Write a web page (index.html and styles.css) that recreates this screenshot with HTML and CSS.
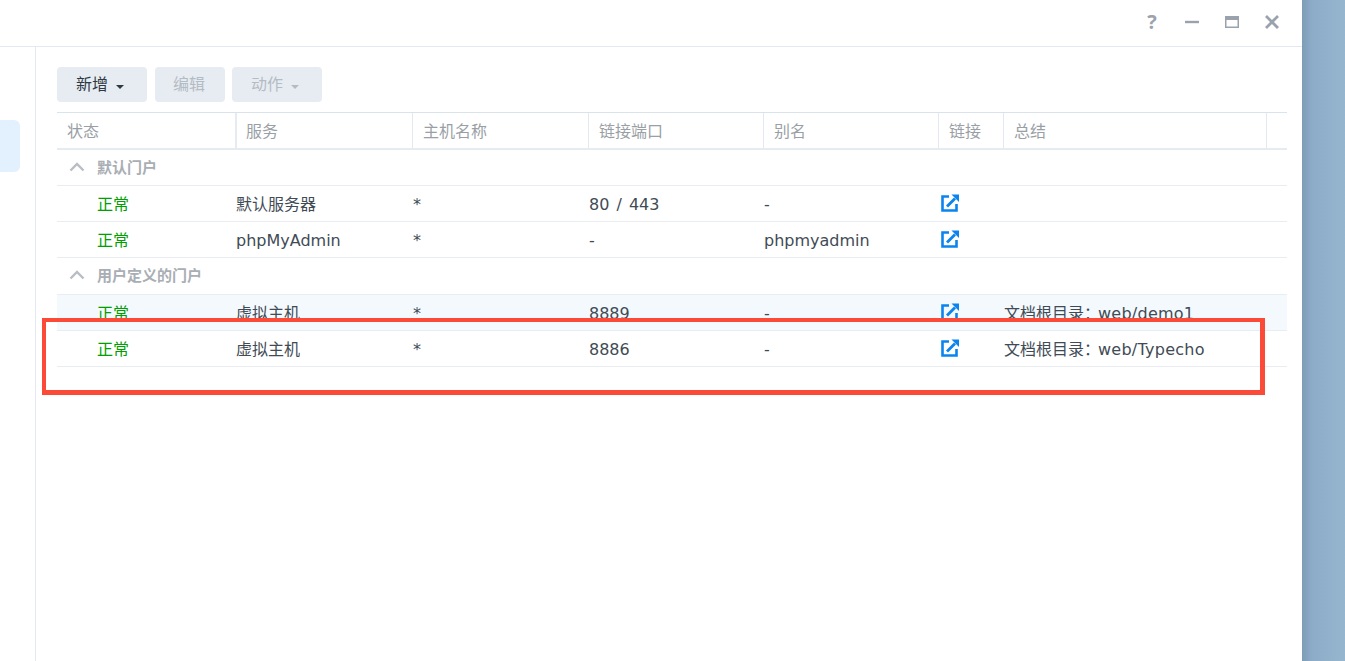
FILE: index.html
```html
<!DOCTYPE html>
<html lang="zh">
<head>
<meta charset="utf-8">
<title>Web Station</title>
<link rel="stylesheet" href="styles.css">
</head>
<body>
<div class="desktop">
  <div class="window">
    <header class="titlebar">
      <span class="win-btn help">?</span>
      <svg class="win-btn" viewBox="0 0 16 16"><path d="M1 8h14" stroke="#9aa3ad" stroke-width="2.400" fill="none"/></svg>
      <svg class="win-btn" viewBox="0 0 16 16"><path fill-rule="evenodd" d="M1 2h14v12H1zM2.500 6v6.500h11V6z" fill="#9aa3ad"/></svg>
      <svg class="win-btn" viewBox="0 0 16 16"><path d="M2 2l12 12M14 2L2 14" stroke="#9aa3ad" stroke-width="2.800" fill="none"/></svg>
    </header>
    <div class="body">
      <aside class="sidebar"><div class="side-item"></div></aside>
      <main class="content">
        <div class="toolbar">
          <button class="btn w-add">新增<i class="caret"></i></button>
          <button class="btn w-edit off">编辑</button>
          <button class="btn w-act off">动作<i class="caret"></i></button>
        </div>
        <div class="table">
          <div class="row head">
            <div>状态</div><div>服务</div><div>主机名称</div><div>链接端口</div><div>别名</div><div>链接</div><div>总结</div><div></div>
          </div>
          <div class="group"><svg class="chev" viewBox="0 0 16 10"><path d="M1.500 8.500L8 2l6.500 6.500" fill="none" stroke="#b9bec4" stroke-width="2.400"/></svg>默认门户</div>
          <div class="row">
            <div class="ok">正常</div><div>默认服务器</div><div>*</div><div class="port">80 / 443</div><div>-</div>
            <div><svg class="link" viewBox="0 0 18 18"><use href="#ext"/></svg></div><div></div><div></div>
          </div>
          <div class="row">
            <div class="ok">正常</div><div>phpMyAdmin</div><div>*</div><div>-</div><div>phpmyadmin</div>
            <div><svg class="link" viewBox="0 0 18 18"><use href="#ext"/></svg></div><div></div><div></div>
          </div>
          <div class="group tall"><svg class="chev" viewBox="0 0 16 10"><path d="M1.500 8.500L8 2l6.500 6.500" fill="none" stroke="#b9bec4" stroke-width="2.400"/></svg>用户定义的门户</div>
          <div class="row hover">
            <div class="ok">正常</div><div>虚拟主机</div><div>*</div><div>8889</div><div>-</div>
            <div><svg class="link" viewBox="0 0 18 18"><use href="#ext"/></svg></div><div>文档根目录：<span class="path">web/demo1</span></div><div></div>
          </div>
          <div class="row">
            <div class="ok">正常</div><div>虚拟主机</div><div>*</div><div>8886</div><div>-</div>
            <div><svg class="link" viewBox="0 0 18 18"><use href="#ext"/></svg></div><div>文档根目录：<span class="path">web/Typecho</span></div><div></div>
          </div>
        </div>
      </main>
    </div>
    <div class="mark"></div>
  </div>
</div>
<svg class="defs" width="0" height="0">
  <defs>
    <g id="ext">
      <path d="M8 2.500H1.500v14h14V10" fill="none" stroke="#0a84ee" stroke-width="2.600"/>
      <path d="M6 12.500L14 4.500" fill="none" stroke="#0a84ee" stroke-width="2.800"/>
      <path d="M10.500 0.500H18V8z" fill="#0a84ee"/>
    </g>
  </defs>
</svg>
</body>
</html>
```

FILE: styles.css
```css
* { box-sizing: border-box; }
html, body { margin: 0; height: 100%; overflow: hidden; }
body { font-family: "DejaVu Sans", "Noto Sans CJK SC", sans-serif; font-size: 16px; color: #414b55; }
.desktop { height: 661px; width: 1345px; background: linear-gradient(90deg, #7d9cb6 1302px, #8cacc7 1312px, #96b6d0 1345px); }
.window { position: relative; width: 1302px; height: 661px; background: #fff; }
.titlebar { height: 47px; border-bottom: 1px solid #e3e9f0; display: flex; align-items: center; justify-content: flex-end; gap: 24px; padding: 0 22px 2px 0; }
.win-btn { width: 16px; height: 16px; display: block; }
.help { font-family: "Open Sans", sans-serif; font-size: 20px; line-height: 16px; font-weight: 700; color: #9aa3ad; text-align: center; }
.body { display: flex; height: 614px; }
.sidebar { width: 36px; border-right: 1px solid #e3e9f0; padding-top: 73px; }
.side-item { width: 20px; height: 52px; background: #e3f0fd; border-radius: 0 6px 6px 0; }
.content { padding: 20px 15px 0 21px; flex: 1; }
.toolbar { display: flex; gap: 8px; height: 35px; margin-bottom: 10px; }
.btn { height: 35px; border: 0; border-radius: 4px; background: #e7ecf3; font: inherit; font-size: 16px; line-height: 20px; color: #2f3943; padding: 1px 0 0; display: flex; align-items: center; justify-content: center; }
.w-add { width: 90px; padding-right: 4px; }
.w-edit { width: 70px; margin-right: -1px; padding-right: 2px; }
.w-act { width: 90px; padding-right: 4px; }
.off { color: #b4bbc3; }
.caret { width: 0; height: 0; margin-left: 8px; margin-top: 4px; border: 4px solid transparent; border-bottom: 0; border-top-color: currentColor; }
.table { border-top: 1px solid #d9e3ec; }
.row { display: grid; grid-template-columns: 178px 177px 176px 175px 175px 65px 263px 21px; height: 36px; padding-top: 2px; align-items: center; border-bottom: 1px solid #e9edf2; line-height: 20px; }
.row > div { padding-left: 1px; white-space: nowrap; }
.row > .ok { padding-left: 40px; color: #00a000; }
.port { word-spacing: 2px; }
.path { letter-spacing: 0.25px; margin-left: -2px; }
.hover { background: #f4f9fe; }
.row.head { grid-template-columns: 180px 176px 176px 175px 175px 65px 263px 20px; padding-top: 0; border-bottom: 2px solid #e6ebf1; align-items: stretch; height: 37px; color: #9a9fa6; }
.row.head > div { padding-left: 10px; line-height: 38px; border-right: 1px solid #e3e9f0; overflow: hidden; }
.row.head > div:first-child { border-right: 2px solid #e6ebf1; }
.row.head > div:nth-child(2) { padding-left: 9px; }
.row.head > div:last-child { border-right: 0; }
.group { height: 36px; border-bottom: 1px solid #e9edf2; display: flex; align-items: center; padding: 0 0 2px 12px; font-size: 15px; font-weight: 700; color: #a9aeb4; }
.tall { height: 37px; padding-bottom: 3px; }
.chev { width: 16px; height: 10px; margin-right: 12px; }
.link { display: block; width: 18px; height: 18px; margin-left: 2px; margin-top: -3px; }
.mark { position: absolute; left: 42px; top: 318px; width: 1223px; height: 77px; border: 4px solid #fb4a37; border-width: 4px 5px 5px 4px; }
.defs { position: absolute; }
```
